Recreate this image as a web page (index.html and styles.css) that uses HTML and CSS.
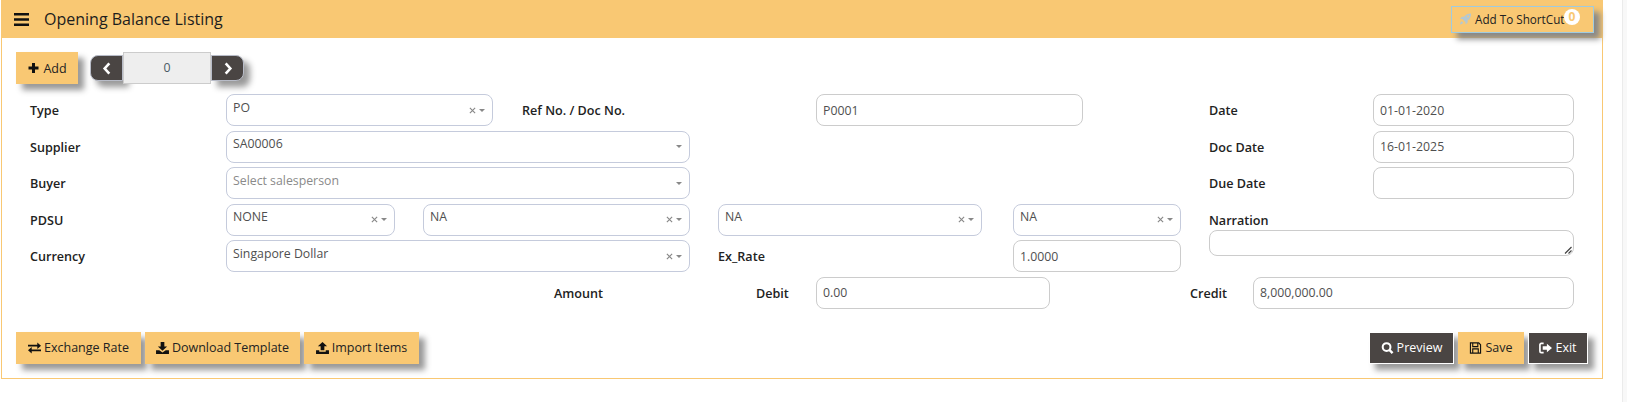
FILE: index.html
```html
<!DOCTYPE html>
<html lang="en">
<head>
<meta charset="utf-8">
<title>Opening Balance Listing</title>
<link rel="stylesheet" href="styles.css">
</head>
<body>
<svg class="defs" width="0" height="0" aria-hidden="true">
  <symbol id="i-clear" viewBox="0 0 8 8"><path d="M1 1l6 6M7 1L1 7" stroke="#888" stroke-width="1.3" fill="none"/></symbol>
</svg>
<div class="page">
  <main class="panel">
    <header class="head">
      <svg class="bars" viewBox="0 0 15 13"><path d="M0 0h15v2.400H0zM0 5.300h15v2.400H0zM0 10.600h15V13H0z" fill="#111"/></svg>
      <h1 class="title">Opening Balance Listing</h1>
      <button class="shortcut" type="button">
        <svg class="ico rocket" viewBox="0 0 14 14"><path d="M13.500.5C10 .4 7.300 1.700 5.200 4.500H2.500L.7 7h2.600l3.700 3.700v2.600l2.500-1.800V8.800C12.300 6.700 13.600 4 13.500.5zM10 3a1 1 0 1 1 0 2 1 1 0 0 1 0-2zM2.500 9.500c-1 .6-1.700 2-2 4 2-.3 3.400-1 4-2z" fill="#b4c8d2"/></svg>
        <span>Add To ShortCut</span>
        <span class="badge">0</span>
      </button>
    </header>

    <div class="toolbar">
      <button class="btn gold add" type="button"><svg class="ico" viewBox="0 0 12 12"><path d="M4.500 1h3v3.500H11v3H7.500V11h-3V7.500H1v-3h3.500z" fill="#111"/></svg>Add</button>
      <div class="pager">
        <button class="pg pg-l" type="button"><svg class="chev" viewBox="0 0 10 14"><path d="M7.500 1.500L2.500 7l5 5.500" stroke="#fff" stroke-width="2.800" fill="none"/></svg></button>
        <div class="pg-val">0</div>
        <button class="pg pg-r" type="button"><svg class="chev" viewBox="0 0 10 14"><path d="M2.500 1.500l5 5.500-5 5.500" stroke="#fff" stroke-width="2.800" fill="none"/></svg></button>
      </div>
    </div>

    <form class="form">
      <label class="lbl c-a r1">Type</label>
      <div class="sel c-type r1"><span>PO</span><svg class="x"><use href="#i-clear"/></svg><i class="car"></i></div>
      <label class="lbl c-ref r1">Ref No. / Doc No.</label>
      <div class="inp c-doc r1">P0001</div>
      <label class="lbl c-o r1">Date</label>
      <div class="inp c-q r1">01-01-2020</div>

      <label class="lbl c-a r2">Supplier</label>
      <div class="sel c-wide r2"><span>SA00006</span><i class="car"></i></div>
      <label class="lbl c-o r2">Doc Date</label>
      <div class="inp c-q r2">16-01-2025</div>

      <label class="lbl c-a r3">Buyer</label>
      <div class="sel c-wide r3"><span class="ph">Select salesperson</span><i class="car"></i></div>
      <label class="lbl c-o r3">Due Date</label>
      <div class="inp c-q r3"></div>

      <label class="lbl c-a r4">PDSU</label>
      <div class="sel c-p1 r4"><span>NONE</span><svg class="x"><use href="#i-clear"/></svg><i class="car"></i></div>
      <div class="sel c-p2 r4"><span>NA</span><svg class="x"><use href="#i-clear"/></svg><i class="car"></i></div>
      <div class="sel c-p3 r4"><span>NA</span><svg class="x"><use href="#i-clear"/></svg><i class="car"></i></div>
      <div class="sel c-p4 r4"><span>NA</span><svg class="x"><use href="#i-clear"/></svg><i class="car"></i></div>
      <div class="narr">
        <label class="lbl-n">Narration</label>
        <div class="area"><svg class="grip" viewBox="0 0 8 8"><path d="M7.500 1L1 7.500M7.500 4.500L4.500 7.500" stroke="#444" stroke-width="1.200"/></svg></div>
      </div>

      <label class="lbl c-a r5">Currency</label>
      <div class="sel c-wide r5"><span>Singapore Dollar</span><svg class="x"><use href="#i-clear"/></svg><i class="car"></i></div>
      <label class="lbl c-ex r5">Ex_Rate</label>
      <div class="inp c-p4 r5">1.0000</div>

      <label class="lbl c-amt r6">Amount</label>
      <label class="lbl c-deb r6">Debit</label>
      <div class="inp c-dinp r6">0.00</div>
      <label class="lbl c-cre r6">Credit</label>
      <div class="inp c-cinp r6">8,000,000.00</div>
    </form>

    <footer class="foot">
      <div class="foot-group">
        <button class="btn gold w-ex" type="button"><svg class="ico" viewBox="0 0 14 12"><path d="M0 2.500h10V0l4 3.500-4 3.500V4.500H0zM14 7.500H4V5L0 8.500 4 12V9.500h10z" fill="#111"/></svg>Exchange Rate</button>
        <button class="btn gold w-dl" type="button"><svg class="ico" viewBox="0 0 14 13"><path d="M5 0h4v5h3L7 9.500 2 5h3zM0 9h3.500L7 11.500 10.500 9H14v4H0z" fill="#111"/></svg>Download Template</button>
        <button class="btn gold w-im" type="button"><svg class="ico" viewBox="0 0 14 13"><path d="M7 0l5 4.500H9V9H5V4.500H2zM0 9h3.500v1.500h7V9H14v4H0z" fill="#111"/></svg>Import Items</button>
      </div>
      <div class="foot-group">
        <button class="btn dark w-pr" type="button"><svg class="ico" viewBox="0 0 13 13"><circle cx="5.500" cy="5.500" r="4.200" stroke="#fff" stroke-width="2.200" fill="none"/><path d="M8.500 8.500L12 12" stroke="#fff" stroke-width="2.600"/></svg>Preview</button>
        <button class="btn gold w-sv" type="button"><svg class="ico" viewBox="0 0 13 13"><path d="M1 1h9l2 2v9H1zM3.500 1.500v3.500h5.500V1.500M3.500 12V7.500h6V12" stroke="#111" stroke-width="1.200" fill="none"/></svg>Save</button>
        <button class="btn dark w-ext" type="button"><svg class="ico" viewBox="0 0 14 12"><path d="M5 1H2.500A1.500 1.500 0 0 0 1 2.500v7A1.500 1.500 0 0 0 2.500 11H5" stroke="#fff" stroke-width="1.800" fill="none"/><path d="M8.500 1.500L14 6l-5.500 4.500V8H4V4h4.500z" fill="#fff"/></svg>Exit</button>
      </div>
    </footer>
  </main>
  <div class="scroll"></div>
</div>
</body>
</html>
```

FILE: styles.css
```css
* { box-sizing: border-box; }
html, body { margin: 0; padding: 0; background: #fff; }
body { font-family: "Open Sans", "Liberation Sans", sans-serif; font-size: 12.3px; color: #212529; overflow: hidden; }
.defs { position: absolute; }
.page { display: flex; justify-content: space-between; height: 402px; padding-left: 1px; }
.panel { width: 1602px; height: 379px; border: 1px solid #f9c873; border-top: 0; }
.scroll { width: 5px; background: #f8f8f8; border-left: 1px solid #ebebeb; }

.head { height: 38px; margin-left: -1px; margin-right: -1px; background: #f9c873; display: flex; align-items: center; padding-left: 13px; padding-right: 9px; }
.bars { width: 15px; height: 13px; margin-right: 15px; }
.title { flex: 1; margin: 0; font-size: 16px; font-weight: 400; color: #1d1d1d; }
.shortcut { position: relative; width: 143px; height: 27px; background: #f9c873; border: 1px solid #9fcbe0; box-shadow: 6px 6px 6px #888; display: flex; align-items: center; padding: 0 0 0 7px; font: 400 11.7px "Open Sans", sans-serif; color: #222; }
.rocket { width: 14px; height: 14px; margin-right: 3px; }
.badge { position: absolute; left: 112px; top: 2px; width: 16px; height: 16px; border-radius: 50%; background: #fff; color: #f9c873; font-weight: 700; font-size: 12px; line-height: 16px; text-align: center; }

.btn { height: 32px; border: 0; display: inline-flex; align-items: center; justify-content: center; gap: 3px; font: 400 12.5px "Open Sans", sans-serif; color: #222; box-shadow: 6px 6px 6px #999; padding: 0; }
.btn.gold { background: #f9c873; }
.btn.dark { background: #4a4543; color: #fff; border: 1px solid #fff; }
.ico { width: 13px; height: 12px; }
.w-ex { width: 125px; } .w-dl { width: 155px; } .w-im { width: 115px; }
.w-pr { width: 85px; } .w-sv { width: 66px; } .w-ext { width: 60px; }

.toolbar { display: flex; align-items: center; padding: 14px 0 0 14px; height: 46px; margin-bottom: 10px; }
.add { width: 62px; }
.pager { display: flex; align-items: center; margin-left: 12px; }
.pg { width: 33px; height: 26px; background: #4a4543; border: 1px solid #b8bcc8; box-shadow: 6px 6px 6px #999; padding: 0; display: flex; align-items: center; justify-content: center; }
.pg-l { border-radius: 8px 0 0 8px; }
.pg-r { border-radius: 0 8px 8px 0; }
.chev { width: 10px; height: 13px; }
.pg-val { width: 88px; height: 32px; background: #eee; border: 1px solid #ccc; text-align: center; line-height: 30px; color: #4a5a64; position: relative; }

.form {
  display: grid;
  margin-left: 28px;
  grid-template-columns: [a] 196px [b] 169px [c] 28px [d] 70px [e] 29px [f] 168px [g] 28px [h] 98px [i] 166px [j] 31px [k] 37px [l] 33px [m] 98px [n] 28px [o] 44px [p] 120px [q] 201px [r];
  grid-template-rows: repeat(6, 32px);
  row-gap: 4.6px;
}
.r1 { grid-row: 1; } .r2 { grid-row: 2; } .r3 { grid-row: 3; } .r4 { grid-row: 4; } .r5 { grid-row: 5; } .r6 { grid-row: 6; }
.c-a { grid-column: a / b; }
.c-type { grid-column: b / e; }
.c-ref { grid-column: f / g; }
.c-doc { grid-column: i / m; }
.c-o { grid-column: o / q; }
.c-q { grid-column: q / r; }
.c-wide { grid-column: b / g; }
.c-p1 { grid-column: b / c; }
.c-p2 { grid-column: d / g; }
.c-p3 { grid-column: h / j; }
.c-p4 { grid-column: k / n; }
.c-ex { grid-column: h / i; }
.c-amt { grid-column: f / g; padding-left: 32px; }
.c-deb { grid-column: h / i; padding-left: 38px; }
.c-dinp { grid-column: i / l; }
.c-cre { grid-column: n / p; padding-left: 9px; }
.c-cinp { grid-column: p / r; }

.lbl { display: flex; align-items: center; font-size: 12.6px; font-weight: 600; color: #222; padding-top: 1px; }
.sel, .inp { border: 1px solid #c5cbdc; border-radius: 8px; background: #fff; display: flex; align-items: center; padding-left: 6px; color: #4f4f4f; }
.inp { border-color: #ccc; }
.sel span { flex: 1; padding-bottom: 6px; }
.sel .ph { color: #8a8a8a; }
.x { width: 7px; height: 7px; margin-right: 3px; }
.car { width: 0; height: 0; border-left: 3px solid transparent; border-right: 3px solid transparent; border-top: 3px solid #888; margin-right: 7px; }

.narr { grid-column: o / r; grid-row: 4 / 6; padding-top: 9px; display: flex; flex-direction: column; gap: 1px; }
.lbl-n { font-size: 12.6px; font-weight: 600; color: #222; line-height: 16px; }
.area { height: 26px; border: 1px solid #ccc; border-radius: 8px; position: relative; }
.grip { position: absolute; right: 1px; bottom: 1px; width: 8px; height: 8px; }

.foot { display: flex; justify-content: space-between; padding: 23px 14px 0 14px; }
.foot-group { display: flex; gap: 4px; }
```
